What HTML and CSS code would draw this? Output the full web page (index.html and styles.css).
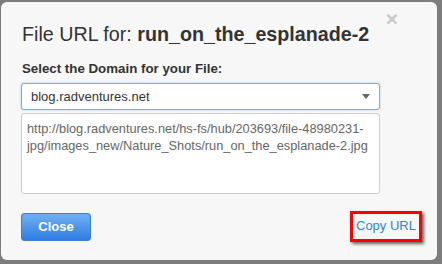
FILE: index.html
```html
<!DOCTYPE html>
<html lang="en">

<head>
  <meta charset="UTF-8" />
  <meta name="viewport" content="width=device-width, initial-scale=1.0" />
  <title>File URL</title>
  <link rel="stylesheet" href="styles.css">
</head>

<body>
  <div class="modal">
    <span class="cerrar">&times;</span>
    <h1>File URL for: <b>run_on_the_esplanade-2</b></h1>

    <label class="etiqueta">Select the Domain for your File:</label>
    <div class="selector">
      <span>blog.radventures.net</span>
      <i class="flecha"></i>
    </div>
    <div class="url">http://blog.radventures.net/hs-fs/hub/203693/file-48980231-jpg/images_new/Nature_Shots/run_on_the_esplanade-2.jpg</div>

    <div class="pie">
      <button class="boton">Close</button>
      <a class="copiar">Copy URL</a>
    </div>
  </div>
</body>

</html>
```

FILE: styles.css
```css
body {
  margin: 0;
  padding: 2px 5px 4px 1px;
  background: #7d7d7d;
  font-family: "Liberation Sans", Arial, sans-serif;
  color: #333;
}

.modal {
  position: relative;
  height: 258px;
  box-sizing: border-box;
  background: #f7f7f7;
  border-radius: 6px;
  padding: 20px 0 0 20px;
}

.cerrar {
  position: absolute;
  top: 5px;
  right: 39px;
  font-size: 21px;
  font-weight: bold;
  color: #c8c8c8;
}

h1 {
  margin: 0 0 15px 1px;
  font-size: 19.7px;
  font-weight: normal;
  line-height: 24px;
}

.etiqueta {
  display: block;
  margin-left: 1px;
  font-size: 13.3px;
  font-weight: bold;
  line-height: 16px;
  margin-bottom: 6px;
}

.selector {
  width: 359px;
  height: 27px;
  box-sizing: border-box;
  display: flex;
  align-items: center;
  justify-content: space-between;
  padding: 0 9px 0 9px;
  border: 1px solid #6cb2f2;
  border-radius: 3px;
  background: #fff;
  box-shadow: 0 0 2px rgba(80, 160, 240, 0.6);
  font-size: 13px;
}

.flecha {
  width: 0;
  height: 0;
  border-left: 4px solid transparent;
  border-right: 4px solid transparent;
  border-top: 5px solid #666;
}

.url {
  width: 359px;
  height: 81px;
  box-sizing: border-box;
  margin-top: 3px;
  padding: 6px 5px;
  border: 1px solid #ccc;
  border-radius: 3px;
  background: #fff;
  color: #666;
  font-size: 12.8px;
  line-height: 17px;
  overflow-wrap: break-word;
}

.pie {
  display: flex;
  justify-content: space-between;
  align-items: center;
  width: 401px;
  margin-top: 17px;
}

.boton {
  width: 70px;
  height: 28px;
  border: 1px solid #3a80d8;
  border-radius: 3px;
  background: linear-gradient(#6fb0f2, #2f7de2);
  color: #fff;
  font-family: "Liberation Sans", Arial, sans-serif;
  font-size: 13px;
  font-weight: bold;
}

.copiar {
  box-sizing: border-box;
  width: 72px;
  height: 31px;
  padding: 3px 0 0 3px;
  border: 3px solid #f00;
  box-shadow: 2px 2px 3px rgba(0, 0, 0, 0.6);
  color: #2b86e2;
  font-size: 13px;
  line-height: 18px;
}
```
